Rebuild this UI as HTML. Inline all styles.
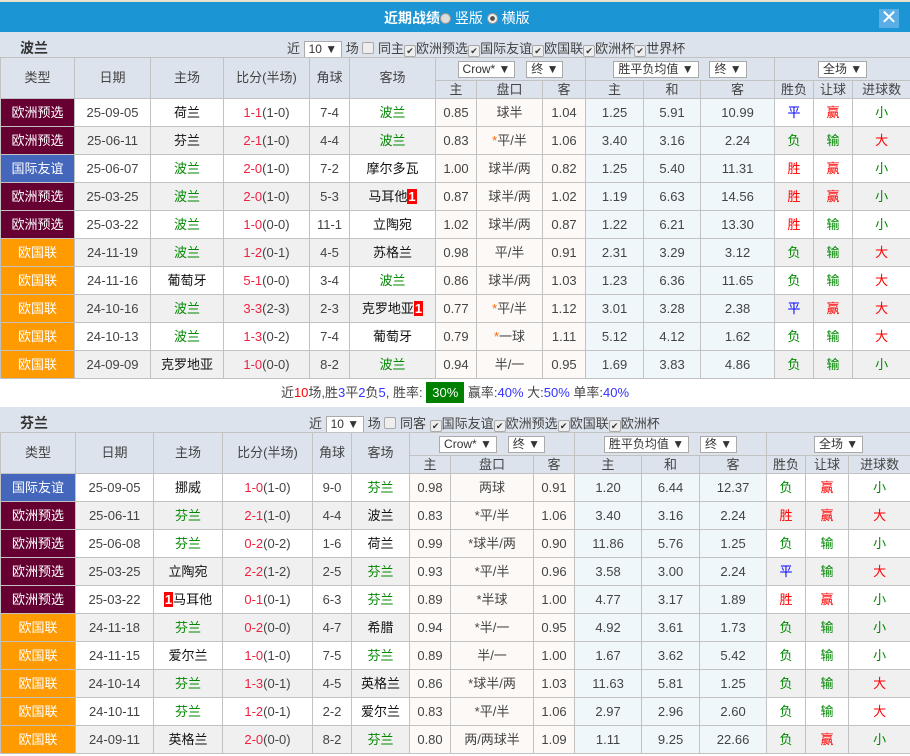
<!DOCTYPE html>
<html><head><meta charset="utf-8">
<style>
*{margin:0;padding:0;box-sizing:border-box}
body{width:910px;height:756px;overflow:hidden;background:#fff;font-family:"Liberation Sans","Noto Sans CJK SC",sans-serif;font-size:13px;color:#444;position:relative}
.bar{position:absolute;left:0;top:0;width:910px;height:32px;background:#1c95d4;border-top:2px solid #e8e2cc;color:#fff}
.bar .t{position:absolute;left:384px;top:6px;font-size:14px}
.bar b{font-weight:bold}
.rad{display:inline-block;width:11px;height:11px;border-radius:50%;background:#ddd;border:1px solid #999;vertical-align:-1px}
.rad.on{background:radial-gradient(circle,#555 35%,#eee 40%)}
.close{position:absolute;left:879px;top:7px;width:20px;height:19px;background:#5aaee6;color:#fff;font-size:20px;line-height:19px;text-align:center}
.sec{position:absolute;left:0;width:910px;background:#dce3ec}
.sec .nm{position:absolute;left:20px;top:6px;font-size:14px;font-weight:bold;color:#333}
.filt{position:absolute;top:6px;font-size:13px;white-space:nowrap;color:#444}
.sel{display:inline-block;background:#fff;border:1px solid #aaa;height:17px;line-height:15px;padding:0 4px;font-size:12px;vertical-align:middle;color:#333}
.cb{display:inline-block;width:12px;height:12px;border:1px solid #aaa;background:#eee;border-radius:2px;vertical-align:-1px;font-size:9px;line-height:10px;text-align:center;color:#333}
table{position:absolute;left:0;border-collapse:collapse;table-layout:fixed;width:910px}
td{border:1px solid #c2c2c2;text-align:center;height:28px;line-height:16px;white-space:nowrap;overflow:hidden;padding:0}
tr.h td{background:#dce3ec;height:23px}
tr.h2 td{height:18px;line-height:14px;background:#dce3ec}
tr.e td{background:#f0f0f0}
td.o{background:#fdf9f6!important}
td.p{background:#eff7fb!important}
td.eq{background:#660033!important;color:#fff}
td.yq{background:#4466bb!important;color:#fff}
td.og{background:#ff9a00!important;color:#fff}
.g{color:#080}.r{color:#f00}.b{color:#00f}.k{color:#111}
.s{color:#f02040}
.sm{color:#f60}
.red1{background:#f00;color:#fff;font-weight:bold;padding:0 1px}
.sum{position:absolute;left:0;width:910px;height:28px;background:#fff;text-align:center;line-height:28px}
.pct{background:#008000;color:#fff;padding:3px 6px}
.bl{color:#33f}
</style></head><body>
<div class="bar"><div class="t"><b>近期战绩</b><span class="rad"></span> 竖版 <span class="rad on"></span> 横版</div><div class="close">✕</div></div>

<div class="sec" style="top:32px;height:25px"><div class="nm">波兰</div>
<div class="filt" style="left:287px">近 <span class="sel">10 ▼</span> 场 <span class="cb"></span> 同主<span class="cb">✔</span>欧洲预选<span class="cb">✔</span>国际友谊<span class="cb">✔</span>欧国联<span class="cb">✔</span>欧洲杯<span class="cb">✔</span>世界杯</div></div>

<table style="top:57px">
<colgroup><col style="width:74px"><col style="width:76px"><col style="width:73px"><col style="width:86px"><col style="width:40px"><col style="width:86px"><col style="width:41px"><col style="width:66px"><col style="width:43px"><col style="width:58px"><col style="width:57px"><col style="width:74px"><col style="width:39px"><col style="width:39px"><col style="width:58px"></colgroup>
<tr class="h"><td rowspan="2">类型</td><td rowspan="2">日期</td><td rowspan="2">主场</td><td rowspan="2">比分(半场)</td><td rowspan="2">角球</td><td rowspan="2">客场</td><td colspan="3"><span class="sel">Crow* ▼</span> &nbsp; <span class="sel">终 ▼</span></td><td colspan="3"><span class="sel">胜平负均值 ▼</span> &nbsp; <span class="sel">终 ▼</span></td><td colspan="3"><span class="sel">全场 ▼</span></td></tr>
<tr class="h2"><td>主</td><td>盘口</td><td>客</td><td>主</td><td>和</td><td>客</td><td>胜负</td><td>让球</td><td>进球数</td></tr>
<tr><td class="eq">欧洲预选</td><td>25-09-05</td><td class="k">荷兰</td><td><span class="s">1-1</span>(1-0)</td><td>7-4</td><td class="g">波兰</td><td class="o">0.85</td><td class="o">球半</td><td class="o">1.04</td><td class="p">1.25</td><td class="p">5.91</td><td class="p">10.99</td><td class="b">平</td><td class="r">赢</td><td class="g">小</td></tr>
<tr class="e"><td class="eq">欧洲预选</td><td>25-06-11</td><td class="k">芬兰</td><td><span class="s">2-1</span>(1-0)</td><td>4-4</td><td class="g">波兰</td><td class="o">0.83</td><td class="o"><span class="sm">*</span>平/半</td><td class="o">1.06</td><td class="p">3.40</td><td class="p">3.16</td><td class="p">2.24</td><td class="g">负</td><td class="g">输</td><td class="r">大</td></tr>
<tr><td class="yq">国际友谊</td><td>25-06-07</td><td class="g">波兰</td><td><span class="s">2-0</span>(1-0)</td><td>7-2</td><td class="k">摩尔多瓦</td><td class="o">1.00</td><td class="o">球半/两</td><td class="o">0.82</td><td class="p">1.25</td><td class="p">5.40</td><td class="p">11.31</td><td class="r">胜</td><td class="r">赢</td><td class="g">小</td></tr>
<tr class="e"><td class="eq">欧洲预选</td><td>25-03-25</td><td class="g">波兰</td><td><span class="s">2-0</span>(1-0)</td><td>5-3</td><td class="k">马耳他<span class="red1">1</span></td><td class="o">0.87</td><td class="o">球半/两</td><td class="o">1.02</td><td class="p">1.19</td><td class="p">6.63</td><td class="p">14.56</td><td class="r">胜</td><td class="r">赢</td><td class="g">小</td></tr>
<tr><td class="eq">欧洲预选</td><td>25-03-22</td><td class="g">波兰</td><td><span class="s">1-0</span>(0-0)</td><td>11-1</td><td class="k">立陶宛</td><td class="o">1.02</td><td class="o">球半/两</td><td class="o">0.87</td><td class="p">1.22</td><td class="p">6.21</td><td class="p">13.30</td><td class="r">胜</td><td class="g">输</td><td class="g">小</td></tr>
<tr class="e"><td class="og">欧国联</td><td>24-11-19</td><td class="g">波兰</td><td><span class="s">1-2</span>(0-1)</td><td>4-5</td><td class="k">苏格兰</td><td class="o">0.98</td><td class="o">平/半</td><td class="o">0.91</td><td class="p">2.31</td><td class="p">3.29</td><td class="p">3.12</td><td class="g">负</td><td class="g">输</td><td class="r">大</td></tr>
<tr><td class="og">欧国联</td><td>24-11-16</td><td class="k">葡萄牙</td><td><span class="s">5-1</span>(0-0)</td><td>3-4</td><td class="g">波兰</td><td class="o">0.86</td><td class="o">球半/两</td><td class="o">1.03</td><td class="p">1.23</td><td class="p">6.36</td><td class="p">11.65</td><td class="g">负</td><td class="g">输</td><td class="r">大</td></tr>
<tr class="e"><td class="og">欧国联</td><td>24-10-16</td><td class="g">波兰</td><td><span class="s">3-3</span>(2-3)</td><td>2-3</td><td class="k">克罗地亚<span class="red1">1</span></td><td class="o">0.77</td><td class="o"><span class="sm">*</span>平/半</td><td class="o">1.12</td><td class="p">3.01</td><td class="p">3.28</td><td class="p">2.38</td><td class="b">平</td><td class="r">赢</td><td class="r">大</td></tr>
<tr><td class="og">欧国联</td><td>24-10-13</td><td class="g">波兰</td><td><span class="s">1-3</span>(0-2)</td><td>7-4</td><td class="k">葡萄牙</td><td class="o">0.79</td><td class="o"><span class="sm">*</span>一球</td><td class="o">1.11</td><td class="p">5.12</td><td class="p">4.12</td><td class="p">1.62</td><td class="g">负</td><td class="g">输</td><td class="r">大</td></tr>
<tr class="e"><td class="og">欧国联</td><td>24-09-09</td><td class="k">克罗地亚</td><td><span class="s">1-0</span>(0-0)</td><td>8-2</td><td class="g">波兰</td><td class="o">0.94</td><td class="o">半/一</td><td class="o">0.95</td><td class="p">1.69</td><td class="p">3.83</td><td class="p">4.86</td><td class="g">负</td><td class="g">输</td><td class="g">小</td></tr>
</table>
<div class="sum" style="top:379px">近<span class="r">10</span>场,胜<span class="bl">3</span>平<span class="bl">2</span>负<span class="bl">5</span>, 胜率: <span class="pct">30%</span> 赢率:<span class="bl">40%</span> 大:<span class="bl">50%</span> 单率:<span class="bl">40%</span></div>

<div class="sec" style="top:407px;height:25px"><div class="nm">芬兰</div>
<div class="filt" style="left:309px">近 <span class="sel">10 ▼</span> 场 <span class="cb"></span> 同客 <span class="cb">✔</span>国际友谊<span class="cb">✔</span>欧洲预选<span class="cb">✔</span>欧国联<span class="cb">✔</span>欧洲杯</div></div>

<table style="top:432px">
<colgroup><col style="width:75px"><col style="width:78px"><col style="width:69px"><col style="width:90px"><col style="width:39px"><col style="width:58px"><col style="width:41px"><col style="width:83px"><col style="width:41px"><col style="width:67px"><col style="width:58px"><col style="width:67px"><col style="width:39px"><col style="width:43px"><col style="width:62px"></colgroup>
<tr class="h"><td rowspan="2">类型</td><td rowspan="2">日期</td><td rowspan="2">主场</td><td rowspan="2">比分(半场)</td><td rowspan="2">角球</td><td rowspan="2">客场</td><td colspan="3"><span class="sel">Crow* ▼</span> &nbsp; <span class="sel">终 ▼</span></td><td colspan="3"><span class="sel">胜平负均值 ▼</span> &nbsp; <span class="sel">终 ▼</span></td><td colspan="3"><span class="sel">全场 ▼</span></td></tr>
<tr class="h2"><td>主</td><td>盘口</td><td>客</td><td>主</td><td>和</td><td>客</td><td>胜负</td><td>让球</td><td>进球数</td></tr>
<tr><td class="yq">国际友谊</td><td>25-09-05</td><td class="k">挪威</td><td><span class="s">1-0</span>(1-0)</td><td>9-0</td><td class="g">芬兰</td><td class="o">0.98</td><td class="o">两球</td><td class="o">0.91</td><td class="p">1.20</td><td class="p">6.44</td><td class="p">12.37</td><td class="g">负</td><td class="r">赢</td><td class="g">小</td></tr>
<tr class="e"><td class="eq">欧洲预选</td><td>25-06-11</td><td class="g">芬兰</td><td><span class="s">2-1</span>(1-0)</td><td>4-4</td><td class="k">波兰</td><td class="o">0.83</td><td class="o">*平/半</td><td class="o">1.06</td><td class="p">3.40</td><td class="p">3.16</td><td class="p">2.24</td><td class="r">胜</td><td class="r">赢</td><td class="r">大</td></tr>
<tr><td class="eq">欧洲预选</td><td>25-06-08</td><td class="g">芬兰</td><td><span class="s">0-2</span>(0-2)</td><td>1-6</td><td class="k">荷兰</td><td class="o">0.99</td><td class="o">*球半/两</td><td class="o">0.90</td><td class="p">11.86</td><td class="p">5.76</td><td class="p">1.25</td><td class="g">负</td><td class="g">输</td><td class="g">小</td></tr>
<tr class="e"><td class="eq">欧洲预选</td><td>25-03-25</td><td class="k">立陶宛</td><td><span class="s">2-2</span>(1-2)</td><td>2-5</td><td class="g">芬兰</td><td class="o">0.93</td><td class="o">*平/半</td><td class="o">0.96</td><td class="p">3.58</td><td class="p">3.00</td><td class="p">2.24</td><td class="b">平</td><td class="g">输</td><td class="r">大</td></tr>
<tr><td class="eq">欧洲预选</td><td>25-03-22</td><td class="k"><span class="red1">1</span>马耳他</td><td><span class="s">0-1</span>(0-1)</td><td>6-3</td><td class="g">芬兰</td><td class="o">0.89</td><td class="o">*半球</td><td class="o">1.00</td><td class="p">4.77</td><td class="p">3.17</td><td class="p">1.89</td><td class="r">胜</td><td class="r">赢</td><td class="g">小</td></tr>
<tr class="e"><td class="og">欧国联</td><td>24-11-18</td><td class="g">芬兰</td><td><span class="s">0-2</span>(0-0)</td><td>4-7</td><td class="k">希腊</td><td class="o">0.94</td><td class="o">*半/一</td><td class="o">0.95</td><td class="p">4.92</td><td class="p">3.61</td><td class="p">1.73</td><td class="g">负</td><td class="g">输</td><td class="g">小</td></tr>
<tr><td class="og">欧国联</td><td>24-11-15</td><td class="k">爱尔兰</td><td><span class="s">1-0</span>(1-0)</td><td>7-5</td><td class="g">芬兰</td><td class="o">0.89</td><td class="o">半/一</td><td class="o">1.00</td><td class="p">1.67</td><td class="p">3.62</td><td class="p">5.42</td><td class="g">负</td><td class="g">输</td><td class="g">小</td></tr>
<tr class="e"><td class="og">欧国联</td><td>24-10-14</td><td class="g">芬兰</td><td><span class="s">1-3</span>(0-1)</td><td>4-5</td><td class="k">英格兰</td><td class="o">0.86</td><td class="o">*球半/两</td><td class="o">1.03</td><td class="p">11.63</td><td class="p">5.81</td><td class="p">1.25</td><td class="g">负</td><td class="g">输</td><td class="r">大</td></tr>
<tr><td class="og">欧国联</td><td>24-10-11</td><td class="g">芬兰</td><td><span class="s">1-2</span>(0-1)</td><td>2-2</td><td class="k">爱尔兰</td><td class="o">0.83</td><td class="o">*平/半</td><td class="o">1.06</td><td class="p">2.97</td><td class="p">2.96</td><td class="p">2.60</td><td class="g">负</td><td class="g">输</td><td class="r">大</td></tr>
<tr class="e"><td class="og">欧国联</td><td>24-09-11</td><td class="k">英格兰</td><td><span class="s">2-0</span>(0-0)</td><td>8-2</td><td class="g">芬兰</td><td class="o">0.80</td><td class="o">两/两球半</td><td class="o">1.09</td><td class="p">1.11</td><td class="p">9.25</td><td class="p">22.66</td><td class="g">负</td><td class="r">赢</td><td class="g">小</td></tr>
</table>
</body></html>
